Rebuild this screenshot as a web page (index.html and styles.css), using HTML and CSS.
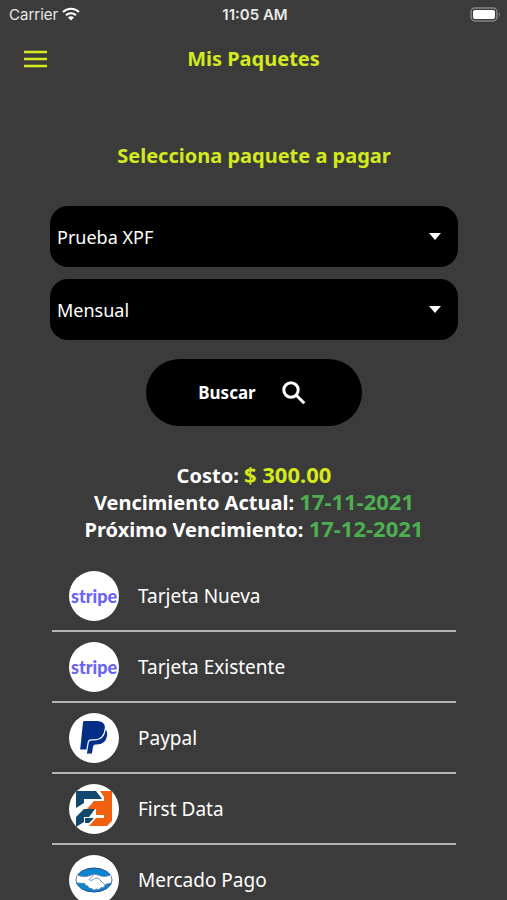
FILE: index.html
```html
<!DOCTYPE html>
<html lang="es">
<head>
    <meta charset="UTF-8">
    <meta name="viewport" content="width=device-width, initial-scale=1.0">
    <title>Mis Paquetes</title>
    <link rel="stylesheet" href="styles.css">
</head>
<body>
    <div class="app">
        <!-- Status bar -->
        <div class="status-bar">
            <div class="carrier">
                <span>Carrier</span>
                <svg class="wifi" viewBox="0 0 18 14" aria-hidden="true">
                    <path d="M1 5a11.500 11.500 0 0 1 16 0" />
                    <path d="M4 8.300a7 7 0 0 1 10 0" />
                    <path class="wifi-dot" d="M6 10.600a4.300 4.300 0 0 1 6 0L9 13.600z" />
                </svg>
            </div>
            <div class="clock">11:05 AM</div>
            <div class="battery">
                <svg viewBox="0 0 31 15" aria-hidden="true">
                    <rect x="1" y="1" width="26" height="13" rx="4" fill="#3c3b3b" stroke="#858585" stroke-width="1.500" />
                    <rect x="3" y="3" width="22" height="9" rx="2" fill="#fff" />
                    <path d="M29 5q2 2.500 0 5z" fill="#858585" />
                </svg>
            </div>
        </div>

        <!-- Header -->
        <header class="header">
            <button class="menu-button" type="button" aria-label="Menú">
                <svg viewBox="0 0 24 18" aria-hidden="true">
                    <path d="M0 2h23M0 9h23M0 16h23" />
                </svg>
            </button>
            <h1 class="title">Mis Paquetes</h1>
        </header>

        <main class="content">
            <h2 class="subtitle">Selecciona paquete a pagar</h2>

            <!-- Search form -->
            <form class="search-form">
                <div class="select-box">
                    <select class="select" aria-label="Paquete">
                        <option>Prueba XPF</option>
                    </select>
                    <svg class="arrow" viewBox="0 0 12 7" aria-hidden="true"><path d="M0 0h12L6 7z" /></svg>
                </div>
                <div class="select-box">
                    <select class="select" aria-label="Periodo">
                        <option>Mensual</option>
                    </select>
                    <svg class="arrow" viewBox="0 0 12 7" aria-hidden="true"><path d="M0 0h12L6 7z" /></svg>
                </div>
                <button class="search-button" type="button">
                    Buscar
                    <svg viewBox="0 0 24 24" aria-hidden="true">
                        <circle cx="9" cy="9" r="7.200" />
                        <path d="M14 14l8.300 8.300" />
                    </svg>
                </button>
            </form>

            <!-- Package summary -->
            <div class="summary">
                <div>Costo: <span class="cost">$ 300.00</span></div>
                <div>Vencimiento Actual: <span class="date">17-11-2021</span></div>
                <div>Próximo Vencimiento: <span class="date">17-12-2021</span></div>
            </div>

            <!-- Payment methods -->
            <nav class="methods">
                <a class="method" href="#">
                    <span class="logo stripe" aria-hidden="true">stripe</span>
                    <span>Tarjeta Nueva</span>
                </a>
                <a class="method" href="#">
                    <span class="logo stripe" aria-hidden="true">stripe</span>
                    <span>Tarjeta Existente</span>
                </a>
                <a class="method" href="#">
                    <span class="logo">
                        <svg viewBox="0 0 50 50" aria-hidden="true">
                            <path d="M15.500 8h12c7 0 9.500 4 8.300 10-1.200 6.500-5.500 9-11.500 9h-2c-1.500 0-2 .7-2.300 2.200L18.800 36.500h-7.600L14 9.300q.2-1.300 1.500-1.300z" fill="#012f87" />
                            <path d="M36.300 15.500c2.500 2 2.900 4.500 2.300 7.500-1.200 6.500-5 9-11 9h-1c-1.200 0-1.800.6-2 1.800l-1.200 7.400h-6.200l2-11.700c.3-1.700 1.300-2.700 3-2.700h3c6.500 0 10.300-3.800 11.100-11.300z" fill="#012f87" stroke="#fff" stroke-width="1.200" />
                        </svg>
                    </span>
                    <span>Paypal</span>
                </a>
                <a class="method" href="#">
                    <span class="logo">
                        <svg viewBox="0 0 50 50" aria-hidden="true">
                            <path d="M7 7h20l6 8H15v4l-8 5z" fill="#10486e" />
                            <path d="M7 33l8-8h11l-6 8h-5v5l-8 5z" fill="#10486e" />
                            <path d="M16 34h9l-5 5h-4z" fill="#10486e" />
                            <path d="M31 7h12v18H18l7-8h10v-4z" fill="#f0600e" />
                            <path d="M27 25h16v12l-5 5H20l7-8h8v-3h-8z" fill="#f0600e" />
                        </svg>
                    </span>
                    <span>First Data</span>
                </a>
                <a class="method" href="#">
                    <span class="logo">
                        <svg viewBox="0 0 50 50" aria-hidden="true">
                            <ellipse cx="25" cy="25" rx="18" ry="12" fill="#0b86d0" stroke="#254a91" />
                            <path d="M8.500 20c5 2 9 2 13 .3 3-1.300 5-1.300 8 0 4 1.600 8 1.600 12-.3 1 2 1.500 5 .5 8l-6 1.500c0 3-2.500 3.500-4 3-1 2-3 2.500-4.500 1.500-2 1.800-4 1-4.500-.5-2.500.5-4-1-4-2.500-2 0-3-1-3-2.500L8 28c-1-2.500-.7-5.500.5-8z" fill="#fff" />
                            <path d="M8.500 20c5 2 9 2 13 .3 3-1.300 5-1.300 8 0 4 1.600 8 1.600 12-.3M8 28l8 .5c0 1.500 1 2.500 3 2.500 0 1.500 1.500 3 4 2.500.5 1.500 2.500 2.300 4.500.5 1.500 1 3.500.5 4.500-1.500 1.500.5 4 0 4-3l6-1.500M24.500 20l-4.500 4.500c1.500 1.500 4 .8 6-1.200l3-.3 6.500 6.500" fill="none" stroke="#5577a8" stroke-width=".8" />
                        </svg>
                    </span>
                    <span>Mercado Pago</span>
                </a>
            </nav>
        </main>
    </div>
</body>
</html>
```
FILE: styles.css
```css
* {
    margin: 0;
    padding: 0;
    box-sizing: border-box;
}

body {
    font-family: "Noto Sans", "Open Sans", sans-serif;
    background-color: #3c3b3b;
    color: #fff;
}

.app {
    display: flex;
    flex-direction: column;
    height: 100vh;
}

.status-bar {
    display: grid;
    grid-template-columns: 1fr auto 1fr;
    align-items: center;
    height: 28px;
    padding: 0 6px 0 9px;
    font-family: Inter, "Liberation Sans", sans-serif;
    font-size: 15px;
    color: #e8e8e8;
}

.carrier {
    display: flex;
    align-items: center;
    gap: 4px;
}

.wifi {
    width: 18px;
    height: 14px;
    fill: none;
    stroke: #fff;
    stroke-width: 2;
}

.wifi .wifi-dot {
    fill: #fff;
    stroke: none;
}

.clock {
    font-weight: 600;
}

.battery {
    display: flex;
    justify-content: flex-end;
}

.battery svg {
    width: 31px;
    height: 15px;
}

.header {
    display: grid;
    grid-template-columns: 48px 1fr 48px;
    align-items: center;
    height: 62px;
    padding: 0 12px;
    color: #d3ea1c;
}

.menu-button {
    display: flex;
    align-items: center;
    justify-content: center;
    height: 48px;
    background: none;
    border: none;
    color: inherit;
}

.menu-button svg {
    width: 24px;
    height: 18px;
    stroke: currentColor;
    stroke-width: 2.5;
}

.title,
.subtitle {
    font-size: 20px;
    font-weight: 700;
    line-height: 28px;
    text-align: center;
}

.content {
    flex: 1;
    padding: 52px 49px 0 50px;
    overflow-y: auto;
    scrollbar-width: none;
}

.subtitle {
    color: #d3ea1c;
}

.search-form {
    display: flex;
    flex-direction: column;
    align-items: center;
    gap: 12px;
    margin-top: 36px;
}

.select-box {
    display: grid;
    align-items: center;
    width: 100%;
}

.select,
.arrow {
    grid-area: 1 / 1;
}

.select {
    width: 100%;
    height: 61px;
    padding: 0 40px 0 7px;
    border: none;
    border-radius: 18px;
    background: #000;
    color: #fff;
    font-family: inherit;
    font-size: 18px;
    appearance: none;
}

.arrow {
    justify-self: end;
    width: 12px;
    height: 7px;
    margin-right: 17px;
    fill: #fff;
    pointer-events: none;
}

.search-button {
    display: flex;
    align-items: center;
    justify-content: center;
    gap: 26px;
    width: 216px;
    height: 67px;
    margin-top: 7px;
    padding-right: 4px;
    border: none;
    border-radius: 34px;
    background: #000;
    color: #fff;
    font-family: inherit;
    font-size: 17px;
    font-weight: 700;
}

.search-button svg {
    width: 24px;
    height: 24px;
    fill: none;
    stroke: #fff;
    stroke-width: 3;
}

.summary {
    margin-top: 36px;
    font-size: 20px;
    font-weight: 700;
    line-height: 27px;
    text-align: center;
}

.cost,
.date {
    font-size: 22px;
    line-height: 20px;
}

.cost {
    color: #d3ea1c;
}

.date {
    color: #4caf50;
}

.methods {
    margin: 18px 2px 0;
}

.method {
    display: flex;
    align-items: center;
    gap: 19px;
    height: 71px;
    padding-left: 17px;
    border-bottom: 2px solid #b4b4b4;
    color: #fff;
    font-size: 19px;
    text-decoration: none;
}

.logo {
    display: flex;
    align-items: center;
    justify-content: center;
    width: 50px;
    height: 50px;
    border-radius: 50%;
    background: #fff;
}

.logo svg {
    width: 50px;
    height: 50px;
}

.stripe {
    color: #6b63f6;
    font-family: Lato, "Noto Sans", sans-serif;
    font-size: 18px;
    font-weight: 900;
    line-height: 20px;
}
```
